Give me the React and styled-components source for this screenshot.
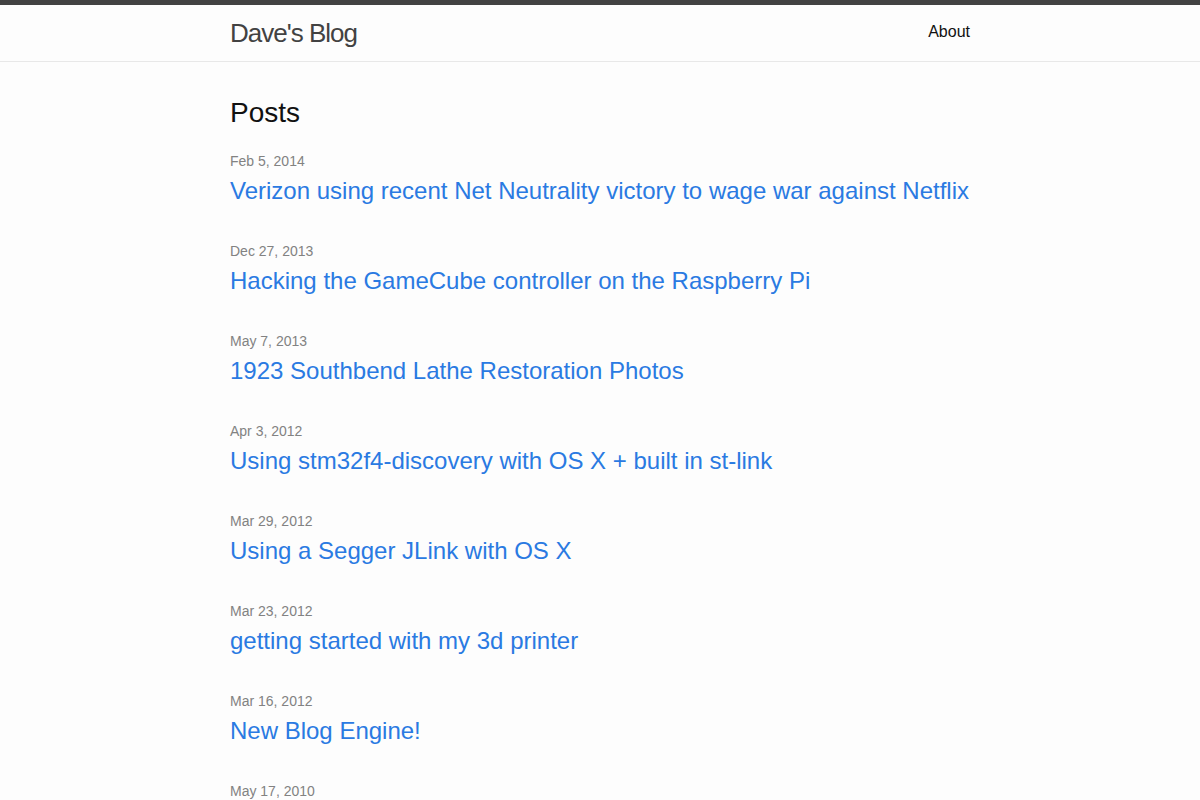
import React from "react";
import styled, { createGlobalStyle } from "styled-components";

const GlobalStyle = createGlobalStyle`
  body {
    margin: 0;
    background: #fdfdfd;
    color: #111;
    font: 400 16px/1.5 "Liberation Sans", Arial, Helvetica, sans-serif;
    -webkit-font-smoothing: antialiased;
  }
  h1, h2, ul { margin: 0; padding: 0; }
`;

const Wrapper = styled.div`
  max-width: 740px;
  margin: 0 auto;
  padding: 0 30px;
`;

const Header = styled.header`
  border-top: 5px solid #424242;
  border-bottom: 1px solid #e8e8e8;
  min-height: 56px;
`;

const HeaderRow = styled(Wrapper)`
  display: flex;
  justify-content: space-between;
  align-items: flex-start;
`;

const SiteTitle = styled.a`
  font-size: 26px;
  line-height: 56px;
  letter-spacing: -1px;
  color: #424242;
  text-decoration: none;
`;

const NavLink = styled.a`
  line-height: 54px;
  color: #111;
  text-decoration: none;
`;

const Content = styled.main`
  padding: 30px 0;
`;

const PageHeading = styled.h1`
  font-size: 28px;
  font-weight: 400;
  line-height: 1.5;
  margin-bottom: 15px;
`;

const PostList = styled.ul`
  list-style: none;
`;

const PostItem = styled.li`
  margin-bottom: 30px;
`;

const PostMeta = styled.span`
  font-size: 14px;
  color: #828282;
`;

const PostTitle = styled.h2`
  font-size: 24px;
  font-weight: 400;
  line-height: 1.5;
`;

const PostLink = styled.a`
  display: block;
  color: #2a7ae2;
  text-decoration: none;
`;

const posts = [
  ["Feb 5, 2014", "Verizon using recent Net Neutrality victory to wage war against Netflix"],
  ["Dec 27, 2013", "Hacking the GameCube controller on the Raspberry Pi"],
  ["May 7, 2013", "1923 Southbend Lathe Restoration Photos"],
  ["Apr 3, 2012", "Using stm32f4-discovery with OS X + built in st-link"],
  ["Mar 29, 2012", "Using a Segger JLink with OS X"],
  ["Mar 23, 2012", "getting started with my 3d printer"],
  ["Mar 16, 2012", "New Blog Engine!"],
  ["May 17, 2010", "Hello World"],
];

export default function App() {
  return (
    <>
      <GlobalStyle />
      <Header>
        <HeaderRow>
          <SiteTitle href="#">Dave's Blog</SiteTitle>
          <NavLink href="#">About</NavLink>
        </HeaderRow>
      </Header>
      <Content>
        <Wrapper>
          <PageHeading>Posts</PageHeading>
          <PostList>
            {posts.map(([date, title]) => (
              <PostItem key={title}>
                <PostMeta>{date}</PostMeta>
                <PostTitle>
                  <PostLink href="#">{title}</PostLink>
                </PostTitle>
              </PostItem>
            ))}
          </PostList>
        </Wrapper>
      </Content>
    </>
  );
}
